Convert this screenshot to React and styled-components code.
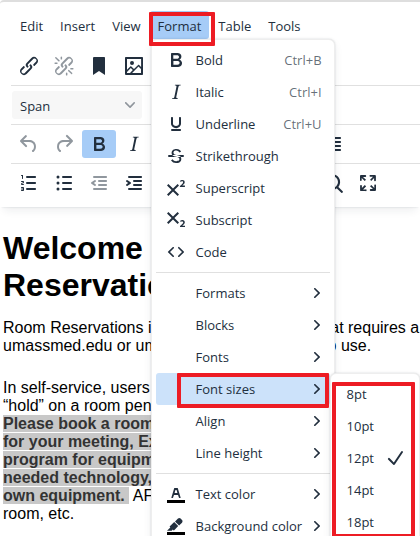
import React from 'react'
import styled, { createGlobalStyle, css } from 'styled-components'

const icons = {
  bold: 'M7.8 19c-.3 0-.5 0-.6-.2l-.2-.5V5.7c0-.2 0-.4.2-.5l.6-.2h5c1.5 0 2.7.3 3.5 1 .7.6 1.1 1.4 1.1 2.5a3 3 0 0 1-.6 1.9c-.4.6-1 1-1.6 1.2.4.1.9.3 1.3.6s.8.7 1 1.2c.4.4.5 1 .5 1.6 0 1.3-.4 2.3-1.3 3-.8.7-2.1 1-3.8 1H7.8Zm5-8.3c.6 0 1.2-.1 1.6-.5.4-.3.6-.7.6-1.3 0-1.1-.8-1.7-2.3-1.7H9.3v3.5h3.4Zm.5 6c.7 0 1.3-.1 1.7-.4.4-.4.6-.9.6-1.5s-.2-1-.7-1.4c-.4-.3-1-.4-2-.4H9.4v3.8h4Z',
  italic: 'm16.7 4.7-.1.9h-.3c-.6 0-1 0-1.4.3-.3.3-.4.6-.5 1.1l-2.1 9.8v.6c0 .5.4.8 1.4.8h.2l-.2.8H8l.2-.8h.2c1.1 0 1.8-.5 2-1.5l2-9.8.1-.5c0-.6-.4-.8-1.4-.8h-.3l.2-.9h5.8Z',
  underline: 'M16 5c.6 0 1 .4 1 1v5.5a4 4 0 0 1-.4 1.8l-1 1.4a5.3 5.3 0 0 1-5.5 1 5 5 0 0 1-1.6-1c-.5-.4-.8-.9-1.1-1.4a4 4 0 0 1-.4-1.8V6c0-.6.4-1 1-1s1 .4 1 1v5.5c0 .3 0 .6.2 1l.6.7a3.3 3.3 0 0 0 2.2.8 3.4 3.4 0 0 0 2.2-.8c.3-.2.4-.5.6-.8l.2-.9V6c0-.6.4-1 1-1ZM8 17h8c.6 0 1 .4 1 1s-.4 1-1 1H8a1 1 0 0 1 0-2Z',
  strike: 'M15.6 8.5c-.5-.7-1-1.1-1.3-1.3-.6-.4-1.3-.6-2-.6-2.7 0-2.8 1.7-2.8 2.1 0 1.6 1.8 2 3.2 2.3 4.4.9 4.6 2.8 4.6 3.9 0 1.4-.7 4.1-5 4.1A6.2 6.2 0 0 1 7 16.4l1.5-1.1c.4.6 1.6 2 3.7 2 1.6 0 2.5-.4 3-1.2.4-.8.3-2-.8-2.6-.7-.4-1.6-.7-2.9-1-1-.2-3.9-.8-3.9-3.6C7.6 6 10.3 5 12.4 5c2.9 0 4.2 1.6 4.7 2.4l-1.5 1.1ZM5 11h14a1 1 0 0 1 0 2H5a1 1 0 0 1 0-2Z',
  superscript: 'M15 9.4 10.4 14l4.6 4.6-1.4 1.4L9 15.4 4.4 20 3 18.6 7.6 14 3 9.4 4.4 8 9 12.6 13.6 8 15 9.4Zm5.9 1.6h-5v-1l1-.8 1.7-1.6c.3-.5.5-.9.5-1.3 0-.3 0-.5-.2-.7-.2-.2-.5-.3-.9-.3l-.8.2-.7.4-.4-1.2c.2-.2.5-.4 1-.5.3-.2.8-.2 1.2-.2.8 0 1.4.2 1.8.6.4.4.6 1 .6 1.6 0 .5-.2 1-.5 1.5l-1.3 1.4-.6.5h2.6V11Z',
  subscript: 'm10.4 10 4.6 4.6-1.4 1.4L9 11.4 4.4 16 3 14.6 7.6 10 3 5.4 4.4 4 9 8.6 13.6 4 15 5.4 10.4 10ZM21 19h-5v-1l1-.8 1.7-1.6c.3-.4.5-.8.5-1.2 0-.3 0-.6-.2-.7-.2-.2-.5-.3-.9-.3a2 2 0 0 0-.8.2l-.7.3-.4-1.1 1-.6 1.2-.2c.8 0 1.4.3 1.8.7.4.4.6.9.6 1.5s-.2 1.1-.5 1.6a8 8 0 0 1-1.3 1.3l-.6.6h2.6V19Z',
  code: 'M9.8 15.7c.3.3.3.8 0 1-.3.4-.9.4-1.2 0l-4.4-4.1a.8.8 0 0 1 0-1.2l4.4-4.2c.3-.3.9-.3 1.2 0 .3.3.3.8 0 1.1L6 12l3.8 3.7ZM14.2 15.7c-.3.3-.3.8 0 1 .4.4.9.4 1.2 0l4.4-4.1c.3-.3.3-.9 0-1.2l-4.4-4.2a.8.8 0 0 0-1.2 0c-.3.3-.3.8 0 1.1L18 12l-3.8 3.7Z',
  link: 'M6.2 12.3a1 1 0 0 1 1.4 1.4l-2 2a2 2 0 1 0 2.6 2.8l4.8-4.8a1 1 0 0 0 0-1.4 1 1 0 1 1 1.4-1.3 2.9 2.9 0 0 1 0 4L9.6 20a3.9 3.9 0 0 1-5.5-5.5l2-2Zm11.6-.6a1 1 0 0 1-1.4-1.4l2-2a2 2 0 1 0-2.6-2.8L11 10.3a1 1 0 0 0 0 1.4A1 1 0 1 1 9.6 13a2.9 2.9 0 0 1 0-4L14.4 4a3.9 3.9 0 0 1 5.5 5.5l-2 2Z',
  bookmark: 'M6 4v17l6-4 6 4V4c0-.6-.4-1-1-1H7a1 1 0 0 0-1 1Z',
  image: 'm5 15.7 3.3-3.2c.3-.3.7-.3 1 0L12 15l4.1-4c.3-.4.8-.4 1 0l2 1.9V5H5v10.7ZM5 18V19h3l2.8-2.9-2-2L5 17.9Zm14-3-2.5-2.4-6.4 6.5H19v-4ZM4 3h16c.6 0 1 .4 1 1v16c0 .6-.4 1-1 1H4a1 1 0 0 1-1-1V4c0-.6.4-1 1-1Zm6 8a2 2 0 1 0 0-4 2 2 0 0 0 0 4Z',
  undo: 'M6.4 8H12c3.7 0 6.2 2 6.8 5.1.6 2.7-.4 5.6-2.3 6.8a1 1 0 0 1-1-1.8c1.1-.6 1.8-2.7 1.4-4.6-.5-2.1-2.1-3.5-4.9-3.5H6.4l3.3 3.3a1 1 0 1 1-1.4 1.4l-5-5a1 1 0 0 1 0-1.4l5-5a1 1 0 0 1 1.4 1.4L6.4 8Z',
  redo: 'M17.6 10H12c-2.8 0-4.4 1.4-4.9 3.5-.4 2 .3 4 1.4 4.6a1 1 0 1 1-1 1.8c-2-1.2-2.9-4.1-2.3-6.8.6-3 3-5.1 6.8-5.1h5.6l-3.3-3.3a1 1 0 1 1 1.4-1.4l5 5a1 1 0 0 1 0 1.4l-5 5a1 1 0 0 1-1.4-1.4l3.3-3.3Z',
  numbers: 'M10 17h8c.6 0 1 .4 1 1s-.4 1-1 1h-8a1 1 0 0 1 0-2Zm0-6h8c.6 0 1 .4 1 1s-.4 1-1 1h-8a1 1 0 0 1 0-2Zm0-6h8c.6 0 1 .4 1 1s-.4 1-1 1h-8a1 1 0 1 1 0-2ZM6 4v3.5c0 .3-.2.5-.5.5a.5.5 0 0 1-.5-.5V5h-.5a.5.5 0 0 1 0-1H6Zm-1 8.8.2.2h1.3c.3 0 .5.2.5.5s-.2.5-.5.5H4.9a1 1 0 0 1-.9-1V13c0-.4.3-.8.6-1l1.2-.4.2-.3a.2.2 0 0 0-.2-.2H4.5a.5.5 0 0 1-.5-.5c0-.3.2-.5.5-.5h1.6c.5 0 .9.4.9 1v.1c0 .4-.3.8-.6 1l-1.2.4-.2.3ZM7 17v2c0 .6-.4 1-1 1H4.5a.5.5 0 0 1 0-1h1.2c.2 0 .3-.1.3-.3 0-.2-.1-.3-.3-.3H4.4a.4.4 0 1 1 0-.8h1.3c.2 0 .3-.1.3-.3 0-.2-.1-.3-.3-.3H4.5a.5.5 0 1 1 0-1H6c.6 0 1 .4 1 1Z',
  bullets: 'M11 5h8c.6 0 1 .4 1 1s-.4 1-1 1h-8a1 1 0 0 1 0-2Zm0 6h8c.6 0 1 .4 1 1s-.4 1-1 1h-8a1 1 0 0 1 0-2Zm0 6h8c.6 0 1 .4 1 1s-.4 1-1 1h-8a1 1 0 0 1 0-2ZM4.5 6a1.5 1.5 0 1 1 3 0 1.5 1.5 0 0 1-3 0Zm0 6a1.5 1.5 0 1 1 3 0 1.5 1.5 0 0 1-3 0Zm0 6a1.5 1.5 0 1 1 3 0 1.5 1.5 0 0 1-3 0Z',
  outdent: 'M7 5h12c.6 0 1 .4 1 1s-.4 1-1 1H7a1 1 0 1 1 0-2Zm5 4h7c.6 0 1 .4 1 1s-.4 1-1 1h-7a1 1 0 0 1 0-2Zm0 4h7c.6 0 1 .4 1 1s-.4 1-1 1h-7a1 1 0 0 1 0-2Zm-5 4h12a1 1 0 0 1 0 2H7a1 1 0 0 1 0-2Zm1.6-3.8a1 1 0 0 1-1.2 1.6l-3-2a1 1 0 0 1 0-1.6l3-2a1 1 0 0 1 1.2 1.6L6.8 12l1.8 1.2Z',
  indent: 'M7 5h12c.6 0 1 .4 1 1s-.4 1-1 1H7a1 1 0 1 1 0-2Zm5 4h7c.6 0 1 .4 1 1s-.4 1-1 1h-7a1 1 0 0 1 0-2Zm0 4h7c.6 0 1 .4 1 1s-.4 1-1 1h-7a1 1 0 0 1 0-2Zm-5 4h12a1 1 0 0 1 0 2H7a1 1 0 0 1 0-2Zm-2.6-3.8L6.2 12l-1.8-1.2a1 1 0 0 1 1.2-1.6l3 2a1 1 0 0 1 0 1.6l-3 2a1 1 0 1 1-1.2-1.6Z',
  justify: 'M5 5h14c.6 0 1 .4 1 1s-.4 1-1 1H5a1 1 0 1 1 0-2Zm0 4h14c.6 0 1 .4 1 1s-.4 1-1 1H5a1 1 0 1 1 0-2Zm0 4h14c.6 0 1 .4 1 1s-.4 1-1 1H5a1 1 0 0 1 0-2Zm0 4h14c.6 0 1 .4 1 1s-.4 1-1 1H5a1 1 0 0 1 0-2Z',
  search: 'M16 17.3a8 8 0 1 1 1.4-1.4l4.3 4.4a1 1 0 0 1-1.4 1.4l-4.4-4.3Zm-5-.3a6 6 0 1 0 0-12 6 6 0 0 0 0 12Z',
  fullscreen: 'm15.3 10-1.2-1.3 2.9-3h-2.3a.9.9 0 1 1 0-1.7H19c.5 0 .9.4.9.9v4.4a.9.9 0 1 1-1.8 0V7l-2.9 3Zm0 4 3 3v-2.3a.9.9 0 1 1 1.7 0V19c0 .5-.4.9-.9.9h-4.4a.9.9 0 1 1 0-1.8H17l-3-2.9 1.3-1.2ZM10 15.4l-2.9 3h2.3a.9.9 0 1 1 0 1.7H5a.9.9 0 0 1-.9-.9v-4.4a.9.9 0 1 1 1.8 0V17l2.9-3 1.2 1.3ZM8.7 10 5.7 7v2.3a.9.9 0 0 1-1.7 0V5c0-.5.4-.9.9-.9h4.4a.9.9 0 0 1 0 1.8H7l3 2.9-1.3 1.2Z',
  check: 'M18.2 5.4a1 1 0 0 1 1.6 1.2l-8 12a1 1 0 0 1-1.5.1l-5-5a1 1 0 1 1 1.4-1.4l4.1 4.1 7.4-11Z',
  textColor: 'M8.7 16h-.8a.5.5 0 0 1-.5-.6l2.7-9c.1-.3.3-.4.5-.4h2.8c.2 0 .4.1.5.4l2.7 9a.5.5 0 0 1-.5.6h-.8a.5.5 0 0 1-.4-.4l-.7-2.2c0-.3-.3-.4-.5-.4h-3.4c-.2 0-.4.1-.5.4l-.7 2.2c0 .3-.2.4-.4.4Zm2.6-7.6-.6 2a.5.5 0 0 0 .5.6h1.6a.5.5 0 0 0 .5-.6l-.6-2c0-.3-.3-.4-.5-.4h-.4c-.2 0-.4.1-.5.4Z',
  backColor: 'M7.7 16.7H3l3.3-3.3-.7-.8L10.2 8l4 4.1-4 4.2c-.2.2-.6.2-.8 0l-.6-.7-1.1 1.1Zm5-7.5L11 7.4l3-2.9a2 2 0 0 1 2.6 0L18 6c.7.7.7 2 0 2.7l-2.9 2.9-1.8-1.8-.5-.6',
}

icons.unlink = icons.link + 'M7.6 6.3a.8.8 0 0 1-1 1.1L3.3 4.2a.7.7 0 1 1 1-1l3.2 3.1ZM5.1 8.6a.8.8 0 0 1 0 1.5H3a.8.8 0 0 1 0-1.5H5Zm5-3.5a.8.8 0 0 1-1.5 0V3a.8.8 0 0 1 1.5 0V5Zm6 11.8a.8.8 0 0 1 1-1l3.2 3.2a.8.8 0 0 1-1 1L16 17Zm-2.2 2a.8.8 0 0 1 1.5 0V21a.8.8 0 0 1-1.5 0V19Zm5-3.5a.7.7 0 1 1 0-1.5H21a.8.8 0 0 1 0 1.5H19Z'

function Icon({ name }) {
  return (
    <svg width="24" height="24" viewBox="0 0 24 24" fill="currentColor" aria-hidden="true">
      {name.endsWith('Color') && <path d="M3 18h18v3H3z" fill="#000" />}
      <path d={icons[name]} fillRule="evenodd" />
    </svg>
  )
}

function Chevron({ down }) {
  return (
    <svg width="10" height="10" viewBox="0 0 10 10" fill="currentColor" aria-hidden="true">
      <path
        d={down
          ? 'M8.7 2.2c.3-.3.8-.3 1 0 .4.4.4.9 0 1.2L5.7 7.8c-.3.3-.9.3-1.2 0L.2 3.4a.8.8 0 0 1 0-1.2c.3-.3.8-.3 1.1 0L5 6l3.7-3.8Z'
          : 'M2.2 1.3a.8.8 0 0 1 0-1c.4-.4.9-.4 1.2 0l4.4 4.1c.3.3.3.9 0 1.2L3.4 9.8c-.3.3-.8.3-1.2 0a.8.8 0 0 1 0-1.1L6 5 2.2 1.3Z'}
      />
    </svg>
  )
}

const menus = ['Edit', 'Insert', 'View', 'Format', 'Table', 'Tools']

const inlineFormats = [
  { label: 'Bold', icon: 'bold', keys: 'Ctrl+B' },
  { label: 'Italic', icon: 'italic', keys: 'Ctrl+I' },
  { label: 'Underline', icon: 'underline', keys: 'Ctrl+U' },
  { label: 'Strikethrough', icon: 'strike' },
  { label: 'Superscript', icon: 'superscript' },
  { label: 'Subscript', icon: 'subscript' },
  { label: 'Code', icon: 'code' },
]

const blockFormats = ['Formats', 'Blocks', 'Fonts', 'Font sizes', 'Align', 'Line height']

const colors = [
  { label: 'Text color', icon: 'textColor' },
  { label: 'Background color', icon: 'backColor' },
]

const sizes = ['8pt', '10pt', '12pt', '14pt', '18pt']

function Tool({ icon, label, ...rest }) {
  return (
    <ToolButton type="button" aria-label={label} {...rest}>
      <Icon name={icon} />
    </ToolButton>
  )
}

function FormatMenu() {
  return (
    <Menu>
      {inlineFormats.map((item) => (
        <MenuItem type="button" key={item.label}>
          <IconSlot><Icon name={item.icon} /></IconSlot>
          <Label>{item.label}</Label>
          {item.keys && <Keys>{item.keys}</Keys>}
        </MenuItem>
      ))}
      <Divider />
      {blockFormats.map((label) => (
        <ItemWrap key={label} $marked={label === 'Font sizes'}>
          <MenuItem type="button" $active={label === 'Font sizes'}>
            <IconSlot />
            <Label>{label}</Label>
            <Chevron />
          </MenuItem>
          {label === 'Font sizes' && (
            <SizeMenu>
              {sizes.map((size) => (
                <SizeItem type="button" key={size}>
                  <Label>{size}</Label>
                  {size === '12pt' && <Icon name="check" />}
                </SizeItem>
              ))}
            </SizeMenu>
          )}
        </ItemWrap>
      ))}
      <Divider />
      {colors.map((item) => (
        <MenuItem type="button" key={item.label}>
          <IconSlot><Icon name={item.icon} /></IconSlot>
          <Label>{item.label}</Label>
          <Chevron />
        </MenuItem>
      ))}
    </Menu>
  )
}

function App() {
  return (
    <>
      <GlobalStyle />
      <Editor>
        <Header>
          <MenuBar>
            {menus.map((name) => (
              <MenuSlot key={name} $marked={name === 'Format'}>
                <MenuButton type="button" $active={name === 'Format'}>{name}</MenuButton>
                {name === 'Format' && <FormatMenu />}
              </MenuSlot>
            ))}
          </MenuBar>
          <Toolbar>
            <Tool icon="link" label="Link" />
            <Tool icon="unlink" label="Remove link" disabled />
            <Tool icon="bookmark" label="Anchor" />
            <Tool icon="image" label="Image" />
          </Toolbar>
          <Toolbar>
            <SelectBox>
              <select aria-label="Block format" defaultValue="Span">
                <option>Span</option>
              </select>
              <Chevron down />
            </SelectBox>
          </Toolbar>
          <Toolbar>
            <ToolGroup>
              <Tool icon="undo" label="Undo" disabled />
              <Tool icon="redo" label="Redo" disabled />
              <Tool icon="bold" label="Bold" $active />
              <Tool icon="italic" label="Italic" />
            </ToolGroup>
            <Tool icon="justify" label="Justify" />
          </Toolbar>
          <Toolbar>
            <ToolGroup>
              <Tool icon="numbers" label="Numbered list" />
              <Tool icon="bullets" label="Bullet list" />
              <Tool icon="outdent" label="Decrease indent" disabled />
              <Tool icon="indent" label="Increase indent" />
            </ToolGroup>
            <Tool icon="search" label="Find" />
            <Tool icon="fullscreen" label="Fullscreen" />
          </Toolbar>
        </Header>
        <Content>
          <h1>Welcome to<br />Reservations</h1>
          <p>
            Room Reservations is for any UMass group that requires a<br />
            umassmed.edu or umassmemorial.org email to use.
          </p>
          <p>
            In self-service, users can<br />
            “hold” on a room pending<br />
            <mark>
              Please book a room<br />
              for your meeting, Ex<br />
              program for equipment<br />
              needed technology,<br />
              own equipment.&nbsp;
            </mark>{' '}
            AFTER<br />
            room, etc.
          </p>
        </Content>
      </Editor>
    </>
  )
}

const GlobalStyle = createGlobalStyle`
  * {
    box-sizing: border-box;
  }
  body {
    margin: 0;
    overflow: hidden;
    background: #fff;
  }
  button, select {
    font: inherit;
    color: inherit;
    border: 0;
    background: none;
    padding: 0;
  }
`

// red frame drawn over the item it points at
const frame = css`
  content: '';
  position: absolute;
  border: 4px solid #ed1c24;
  border-radius: 1px;
  pointer-events: none;
  z-index: 3;
`

const Editor = styled.div`
  min-height: 100vh;
  overflow: hidden;
  background: #fff;
`

const Header = styled.header`
  position: relative;
  z-index: 1;
  padding-bottom: 5px;
  border-top: 2px solid #dedede;
  border-radius: 4px 0 0 0;
  background: #fff;
  box-shadow: 0 2px 2px -2px rgba(34, 47, 62, 0.2), 0 8px 8px -4px rgba(34, 47, 62, 0.07);
  color: #222f3e;
  font: 13px/20px 'Open Sans', 'Noto Sans', sans-serif;
`

const MenuBar = styled.nav`
  display: flex;
  gap: 1px;
  padding: 9px 12px 8px;
`

const MenuSlot = styled.div`
  position: relative;

  ${(props) => props.$marked && css`
    &::after {
      ${frame}
      inset: 1px -6px -7px -1px;
    }
  `}
`

const MenuButton = styled.button`
  height: 28px;
  padding: 2px 8px 0;
  border-radius: 3px;
  background: ${(props) => (props.$active ? '#a6ccf7' : 'transparent')};
`

const Toolbar = styled.div`
  display: flex;
  margin-left: 11px;
  padding: 5px 0 5px 1px;
  border-bottom: 1px solid #e0e0e0;

  &:last-child {
    border-bottom: 0;
  }
`

const ToolGroup = styled.div`
  display: flex;
  flex: 0 0 304px;
`

const ToolButton = styled.button`
  display: flex;
  align-items: center;
  justify-content: center;
  width: 34px;
  height: 28px;
  margin-right: 1px;
  border-radius: 3px;
  background: ${(props) => (props.$active ? '#a6ccf7' : 'transparent')};

  &:disabled {
    color: rgba(34, 47, 62, 0.5);
  }
`

const SelectBox = styled.label`
  display: flex;
  align-items: center;
  width: 130px;
  height: 28px;
  padding: 0 7px 0 8px;
  border-radius: 3px;
  background: #f7f7f7;

  select {
    flex: 1;
    padding-top: 2px;
    appearance: none;
    outline: 0;
  }
  svg {
    color: #8f959c;
  }
`

const Menu = styled.div`
  position: absolute;
  top: 100%;
  left: 1px;
  z-index: 2;
  width: 184px;
  padding: 4px;
  border: 1px solid #eee;
  border-radius: 6px;
  background: #fff;
  box-shadow: 0 0 2px rgba(34, 47, 62, 0.2), 0 4px 8px rgba(34, 47, 62, 0.08);
`

const ItemWrap = styled.div`
  position: relative;

  ${(props) => props.$marked && css`
    &::after {
      ${frame}
      inset: 0 1px -3px 21px;
    }
  `}
`

const MenuItem = styled.button`
  display: flex;
  align-items: center;
  width: 100%;
  height: 32px;
  padding: 0 8px;
  border-radius: 3px;
  text-align: left;
  background: ${(props) => (props.$active ? '#cce2fa' : 'transparent')};
`

const IconSlot = styled.span`
  display: flex;
  width: 24px;
  margin-right: 8px;
`

const Label = styled.span`
  flex: 1;
  white-space: nowrap;
`

const Keys = styled.kbd`
  font: inherit;
  color: rgba(34, 47, 62, 0.7);
`

const Divider = styled.hr`
  height: 1px;
  margin: 4px 0;
  border: 0;
  background: #e0e0e0;
`

const SizeMenu = styled.div`
  position: absolute;
  top: 0;
  left: 100%;
  width: 90px;
  padding: 4px;
  border: 1px solid #eee;
  border-radius: 6px;
  background: #fff;
  box-shadow: 0 0 2px rgba(34, 47, 62, 0.2), 0 4px 8px rgba(34, 47, 62, 0.08);

  &::after {
    ${frame}
    inset: 8px 4px 4px 1px;
  }
`

const SizeItem = styled(MenuItem)`
  padding: 0 8px 0 12px;
`

const Content = styled.main`
  padding: 23px 3px 0;
  color: #000;
  font: 16px/18px 'Liberation Sans', Arial, sans-serif;
  white-space: nowrap;

  h1 {
    margin: 0 0 15px;
    font-size: 32px;
    line-height: 37px;
  }
  p {
    margin: 0 0 24px;
  }
  mark {
    background: #c8c8c8;
    color: #333;
    font-weight: bold;
  }
`

export default App
